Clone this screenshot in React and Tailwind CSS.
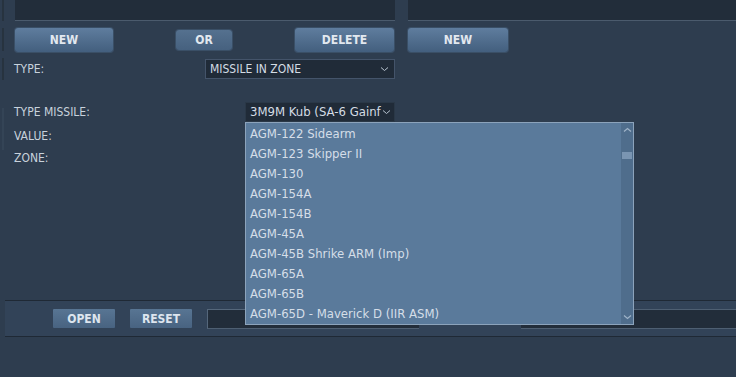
import React from "react";

const items = [
  "AGM-122 Sidearm",
  "AGM-123 Skipper II",
  "AGM-130",
  "AGM-154A",
  "AGM-154B",
  "AGM-45A",
  "AGM-45B Shrike ARM (Imp)",
  "AGM-65A",
  "AGM-65B",
  "AGM-65D - Maverick D (IIR ASM)",
];

const font = {
  fontFamily: '"DejaVu Sans Condensed", "DejaVu Sans", sans-serif',
};

function Btn({ children, className }) {
  return (
    <div
      className={
        "flex items-center justify-center rounded-[3px] bg-gradient-to-b from-[#5f7d9e] to-[#435f7e] text-[12px] font-bold text-[#e2e8ef] shadow-[0_0_0_1px_#3a4f66] " +
        className
      }
    >
      {children}
    </div>
  );
}

function Chevron({ className }) {
  return (
    <svg width="9" height="6" viewBox="0 0 9 6" className={className}>
      <path d="M1 1.5 L4.5 4.5 L8 1.5" fill="none" stroke="currentColor" strokeWidth="1" />
    </svg>
  );
}

export default function App() {
  return (
    <div
      className="relative flex h-[377px] w-[736px] overflow-hidden bg-[#2e3d4f] text-[#c8d2dc]"
      style={font}
    >
      {/* left edge strip */}
      <div className="flex w-[5px] flex-col">
        <div className="ml-[2px] h-[21px] w-[2px] bg-[#27333f]" />
        <div className="ml-[2px] mt-[7px] h-[23px] w-[2px] bg-[#27333f]" />
        <div className="ml-[2px] mt-[7px] h-[22px] w-[2px] bg-[#27333f]" />
        <div className="ml-[2px] mt-[28px] h-[42px] w-[2px] bg-[#344456]" />
      </div>

      <div className="flex flex-1 flex-col">
        {/* top text areas */}
        <div className="flex h-[21px]">
          <div className="ml-[10px] w-[380px] border-b border-[#4b5b6d] bg-[#222d3a]" />
          <div className="ml-[13px] flex-1 border-b border-[#4b5b6d] bg-[#222d3a]" />
        </div>

        {/* buttons row */}
        <div className="mt-[7px] flex h-[24px] items-center">
          <Btn className="ml-[10px] h-[24px] w-[98px]">NEW</Btn>
          <Btn className="ml-[63px] h-[20px] w-[56px] from-[#55718f] to-[#46617f]">OR</Btn>
          <Btn className="ml-[63px] h-[24px] w-[99px]">DELETE</Btn>
          <Btn className="ml-[14px] h-[24px] w-[100px]">NEW</Btn>
        </div>

        {/* TYPE row */}
        <div className="mt-[7px] flex h-[20px] items-center">
          <div className="ml-[9px] w-[191px] text-[12px]">TYPE:</div>
          <div className="flex h-[20px] w-[190px] items-center justify-between border border-[#44546a] bg-[#202b38] pl-[4px] pr-[5px] text-[12px] text-[#d4dce4]">
            <span>MISSILE IN ZONE</span>
            <Chevron className="text-[#b8c4d0]" />
          </div>
        </div>

        {/* TYPE MISSILE row */}
        <div className="mt-[23px] flex h-[20px] items-center">
          <div className="ml-[9px] w-[231px] text-[12px]">TYPE MISSILE:</div>
          <div className="flex h-[20px] w-[150px] items-center justify-between overflow-hidden border border-[#2a3847] bg-[#202b38] pl-[4px] pr-[3px] text-[13px] text-[#d4dce4]">
            <span className="whitespace-nowrap">3M9M Kub (SA-6 Gainf</span>
            <Chevron className="shrink-0 text-[#b8c4d0]" />
          </div>
        </div>

        <div className="ml-[9px] mt-[3px] flex h-[22px] items-center text-[12px]">VALUE:</div>
        <div className="ml-[9px] flex h-[22px] items-center text-[12px]">ZONE:</div>

        <div className="flex-1" />

        {/* bottom bar */}
        <div className="border-y border-[#1f2935] bg-[#324358]">
          <div className="flex h-[35px] items-center">
            <div className="ml-[48px] flex h-[19px] w-[62px] items-center justify-center rounded-[1px] bg-gradient-to-b from-[#587593] to-[#486381] text-[12px] font-bold text-[#dde5ee]">
              OPEN
            </div>
            <div className="ml-[15px] flex h-[19px] w-[62px] items-center justify-center rounded-[1px] bg-gradient-to-b from-[#587593] to-[#486381] text-[12px] font-bold text-[#dde5ee]">
              RESET
            </div>
            <div className="ml-[15px] h-[20px] w-[212px] border-l border-t border-[#55677b] border-b-[#4e5f72] border-b bg-[#222d3a]" />
            <div className="w-[102px]" />
            <div className="h-[20px] flex-1 border-y border-[#4e5f72] bg-[#222d3a]" />
          </div>
        </div>
        <div className="h-[40px]" />
      </div>

      {/* dropdown popup */}
      <div className="absolute left-[245px] top-[122px] flex h-[203px] w-[389px] border border-[#8ca3bb] bg-[#5a7a9b]">
        <div className="flex flex-1 flex-col">
          {items.map((t) => (
            <div
              key={t}
              className="flex h-[20px] items-center whitespace-nowrap pl-[4px] pt-[2px] text-[13px] text-[#d5dee8]"
            >
              {t}
            </div>
          ))}
        </div>
        <div className="flex w-[12px] flex-col items-center bg-[#4f6d8c]">
          <svg width="9" height="6" viewBox="0 0 9 6" className="mt-[4px] text-[#9fb3c8]">
            <path d="M1 4.5 L4.5 1.5 L8 4.5" fill="none" stroke="currentColor" strokeWidth="1.2" />
          </svg>
          <div className="mt-[19px] h-[7px] w-[10px] bg-[#7a95b2]" />
          <div className="flex-1" />
          <svg width="9" height="6" viewBox="0 0 9 6" className="mb-[4px] text-[#9fb3c8]">
            <path d="M1 1.5 L4.5 4.5 L8 1.5" fill="none" stroke="currentColor" strokeWidth="1.2" />
          </svg>
        </div>
      </div>
    </div>
  );
}
